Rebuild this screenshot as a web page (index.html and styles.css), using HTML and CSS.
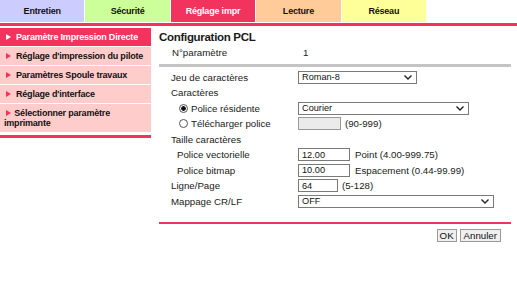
FILE: index.html
```html
<!DOCTYPE html>
<html lang="fr">
<head>
  <meta charset="UTF-8">
  <title>Configuration PCL</title>
  <link rel="stylesheet" href="styles.css">
</head>
<body>
  <div class="tabs">
    <div class="tab tab-maint">Entretien</div>
    <div class="tab tab-secu">Sécurité</div>
    <div class="tab tab-print active">Réglage impr</div>
    <div class="tab tab-read">Lecture</div>
    <div class="tab tab-net">Réseau</div>
  </div>
  <div class="tab-rule"></div>

  <div class="page">
    <nav class="side">
      <ul class="menu">
        <li class="active"><span class="arrow"></span>Paramètre Impression Directe</li>
        <li><span class="arrow"></span>Réglage d'impression du pilote</li>
        <li><span class="arrow"></span>Paramètres Spoule travaux</li>
        <li><span class="arrow"></span>Réglage d'interface</li>
        <li class="two-line"><span class="arrow"></span> Sélectionner paramètre imprimante</li>
      </ul>
      <div class="side-rule"></div>
    </nav>

    <main class="content">
      <h1>Configuration PCL</h1>
      <div class="param">
        <span>N°paramètre</span>
        <span class="param-val">1</span>
      </div>
      <div class="gray-rule"></div>

      <div class="form">
        <div class="label">Jeu de caractères</div>
        <div class="field">
          <div class="select sel-charset">Roman-8<svg class="chev" width="8" height="5" viewBox="0 0 8 5"><polyline points="0.5,0.5 4,4 7.5,0.5" /></svg></div>
        </div>

        <div class="label">Caractères</div>
        <div class="field"></div>

        <div class="label radio-label"><span class="radio checked"></span>Police résidente</div>
        <div class="field">
          <div class="select sel-font">Courier<svg class="chev" width="8" height="5" viewBox="0 0 8 5"><polyline points="0.5,0.5 4,4 7.5,0.5" /></svg></div>
        </div>

        <div class="label radio-label"><span class="radio"></span>Télécharger police</div>
        <div class="field">
          <div class="input in-dl disabled"></div>
          <span class="hint">(90-999)</span>
        </div>

        <div class="label">Taille caractères</div>
        <div class="field"></div>

        <div class="label sub">Police vectorielle</div>
        <div class="field">
          <div class="input in-size">12.00</div>
          <span class="hint wide">Point (4.00-999.75)</span>
        </div>

        <div class="label sub">Police bitmap</div>
        <div class="field">
          <div class="input in-size">10.00</div>
          <span class="hint wide">Espacement (0.44-99.99)</span>
        </div>

        <div class="label">Ligne/Page</div>
        <div class="field">
          <div class="input in-lines">64</div>
          <span class="hint">(5-128)</span>
        </div>

        <div class="label">Mappage CR/LF</div>
        <div class="field">
          <div class="select sel-crlf">OFF<svg class="chev" width="8" height="5" viewBox="0 0 8 5"><polyline points="0.5,0.5 4,4 7.5,0.5" /></svg></div>
        </div>
      </div>

      <div class="red-rule"></div>
      <div class="actions">
        <button class="btn btn-ok">OK</button>
        <button class="btn">Annuler</button>
      </div>
    </main>
  </div>
</body>
</html>
```

FILE: styles.css
```css
:root {
  --crimson: #f2335e;
  --pink: #ffcccc;
  --text: #1a1a1a;
}
* { box-sizing: border-box; }
body {
  margin: 0;
  background: #fff;
  color: var(--text);
  font-family: "Liberation Sans", Arial, sans-serif;
  font-size: 9.7px;
}

/* top tabs */
.tabs {
  display: grid;
  grid-template-columns: repeat(5, 1fr);
  gap: 1px;
  width: 426px;
  height: 22px;
}
.tab {
  display: flex;
  align-items: center;
  justify-content: center;
  font-size: 9px;
  font-weight: bold;
  letter-spacing: -0.2px;
  color: #111;
}
.tab-maint { background: #ccccff; }
.tab-secu { background: #ccff99; }
.tab-print { background: var(--crimson); color: #fff; }
.tab-read { background: #ffcc99; }
.tab-net { background: #ffff99; }
.tab-rule {
  height: 3px;
  margin-top: 1px;
  background: var(--crimson);
}

.page {
  display: flex;
  gap: 8px;
  margin-top: 2px;
}

/* left menu */
.side { width: 151px; flex: none; }
.menu { list-style: none; margin: 0; padding: 0; }
.menu li {
  background: var(--pink);
  height: 18px;
  line-height: 18px;
  margin-bottom: 1px;
  padding-left: 6px;
  font-size: 9px;
  font-weight: bold;
  letter-spacing: -0.2px;
  color: #111;
  white-space: nowrap;
}
.menu li.active { background: var(--crimson); color: #fff; }
.menu li.two-line {
  height: 28px;
  line-height: 10px;
  padding: 4px 0 0 4px;
  white-space: normal;
}
.arrow {
  display: inline-block;
  width: 0;
  height: 0;
  margin-right: 5px;
  border-top: 3px solid transparent;
  border-bottom: 3px solid transparent;
  border-left: 5px solid var(--crimson);
  vertical-align: 0;
}
.menu li.two-line .arrow { margin-left: 2px; margin-right: 1px; }
.menu li.active .arrow { border-left-color: #fff; }
.side-rule {
  height: 3px;
  margin-top: 3px;
  background: var(--crimson);
}

/* main */
.content { width: 352px; padding-top: 1px; }
h1 {
  margin: 0;
  font-size: 11.5px;
  font-weight: bold;
  letter-spacing: -0.3px;
  line-height: 16px;
}
.param {
  display: grid;
  grid-template-columns: 131px 1fr;
  height: 15px;
  line-height: 15px;
  padding-left: 13px;
}
.gray-rule {
  height: 3px;
  margin-top: 4px;
  background: #c4c4c4;
}
.form {
  display: grid;
  grid-template-columns: 127px 1fr;
  grid-auto-rows: 15.5px;
  margin-top: 2.5px;
  padding-left: 12px;
}
.label {
  display: flex;
  align-items: center;
  white-space: nowrap;
}
.label.sub { padding-left: 6px; }
.radio-label { padding-left: 8px; }
.radio {
  width: 9px;
  height: 9px;
  margin-right: 3px;
  border: 1px solid #555;
  border-radius: 50%;
  background: #fff;
}
.radio.checked { background: radial-gradient(circle, #111 0 2px, #fff 2.6px); }
.field {
  display: flex;
  align-items: center;
  gap: 4px;
}
.select, .input {
  display: flex;
  align-items: center;
  height: 13px;
  padding-left: 3px;
  border: 1px solid #7a7a7a;
  background: #fff;
  font-size: 9.2px;
  color: #111;
}
.select { justify-content: space-between; padding-right: 4px; }
.chev { fill: none; stroke: #222; stroke-width: 1.4; }
.sel-charset { width: 119px; }
.sel-font { width: 171px; }
.sel-crlf { width: 196px; }
.in-dl { width: 43px; }
.input.disabled { background: #ebebeb; border-color: #999; }
.in-size { width: 52px; }
.in-lines { width: 40px; }
.hint.wide { margin-left: 1px; }

.red-rule {
  height: 2px;
  margin-top: 13px;
  background: var(--crimson);
}
.actions {
  display: flex;
  justify-content: flex-end;
  gap: 3px;
  margin-top: 5px;
  padding-right: 10px;
}
.btn {
  height: 13px;
  padding: 0 3px;
  border: 1px solid #9a9a9a;
  background: #efefef;
  font-family: inherit;
  font-size: 9.7px;
  line-height: 11px;
  color: #111;
}
.btn-ok { width: 20px; padding: 0; }
```
